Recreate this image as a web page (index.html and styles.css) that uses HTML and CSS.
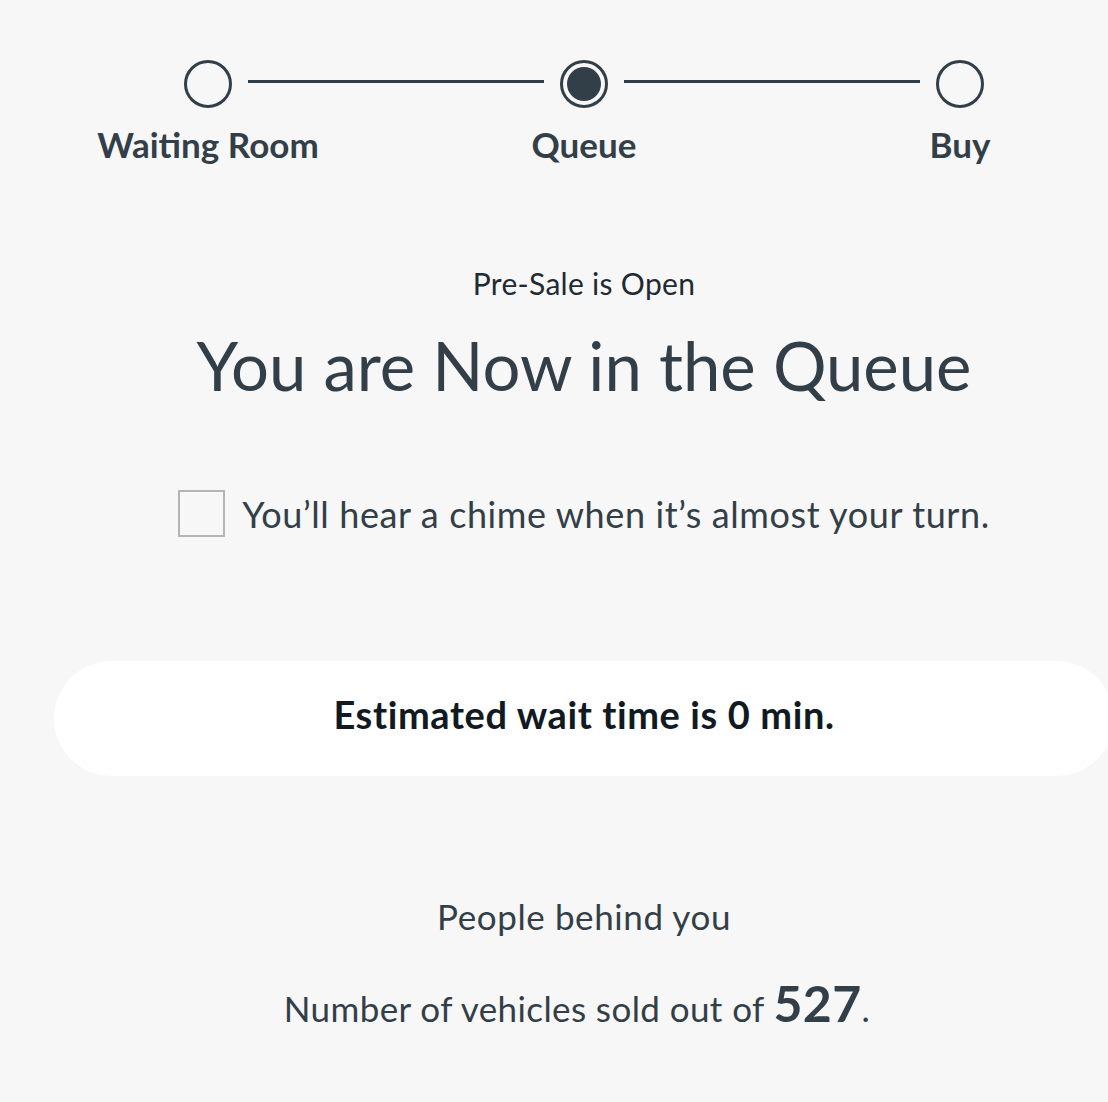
FILE: index.html
```html
<!DOCTYPE html>
<html lang="en">
<head>
    <meta charset="UTF-8">
    <meta name="viewport" content="width=device-width, initial-scale=1.0">
    <title>Queue</title>
    <link rel="stylesheet" href="styles.css">
</head>
<body>

    <div class="page">
        <div class="stepper">
            <div class="step">
                <span class="dot"></span>
                <span class="step-label">Waiting Room</span>
            </div>
            <span class="line"></span>
            <div class="step">
                <span class="dot active"></span>
                <span class="step-label">Queue</span>
            </div>
            <span class="line"></span>
            <div class="step">
                <span class="dot"></span>
                <span class="step-label">Buy</span>
            </div>
        </div>

        <p class="eyebrow">Pre-Sale is Open</p>
        <h1 class="title">You are Now in the Queue</h1>

        <label class="chime">
            <input type="checkbox" id="chime">
            <span class="box"></span>
            <span>You’ll hear a chime when it’s almost your turn.</span>
        </label>

        <div class="wait">Estimated wait time is 0 min.</div>

        <p class="behind">People behind you</p>
        <p class="sold">Number of vehicles sold out of <strong>527</strong>.</p>
    </div>

</body>
</html>
```

FILE: styles.css
```css
body {
    font-family: Lato, "Noto Sans", sans-serif;
    background-color: #f7f7f7;
    color: #333f48;
    margin: 0;
    overflow: hidden;
}

.page {
    width: 1060px;
    margin-left: 54px;
    padding-top: 60px;
    text-align: center;
}

/* progress steps */
.stepper {
    width: 800px;
    margin: 0 auto;
    display: flex;
    align-items: flex-start;
}

.step {
    width: 48px;
    display: flex;
    flex-direction: column;
    align-items: center;
}

.dot {
    width: 48px;
    height: 48px;
    box-sizing: border-box;
    border: 3px solid #333f48;
    border-radius: 50%;
}

.dot.active {
    padding: 4px;
    background-color: #333f48;
    background-clip: content-box;
}

.step-label {
    white-space: nowrap;
    font-size: 35px;
    font-weight: 700;
    margin-top: 15px;
}

.line {
    flex: 1;
    height: 3px;
    margin: 20px 16px 0;
    background-color: #333f48;
}

.eyebrow {
    font-size: 30px;
    letter-spacing: 0.3px;
    margin: 100px 0 0;
    color: #1f2a33;
}

.title {
    font-size: 67px;
    font-weight: 400;
    margin: 24px 0 0;
}

.chime {
    display: flex;
    align-items: center;
    justify-content: center;
    gap: 17px;
    margin-top: 85px;
    font-size: 36px;
    letter-spacing: 0.6px;
}

.chime input {
    display: none;
}

.chime .box {
    width: 47px;
    height: 47px;
    box-sizing: border-box;
    border: 2px solid #b5b5b5;
}

.wait {
    margin-top: 124px;
    width: 1060px;
    height: 115px;
    box-sizing: border-box;
    padding-bottom: 8px;
    line-height: 107px;
    background-color: white;
    border-radius: 58px;
    font-size: 38px;
    letter-spacing: 0.6px;
    font-weight: 700;
    color: #111a22;
}

.behind {
    font-size: 35px;
    letter-spacing: 0.6px;
    margin: 119px 0 0;
}

.sold {
    font-size: 35px;
    letter-spacing: 0.4px;
    margin: 36px 0 0;
    padding-right: 14px;
}

.sold strong {
    font-size: 50px;
}
```
